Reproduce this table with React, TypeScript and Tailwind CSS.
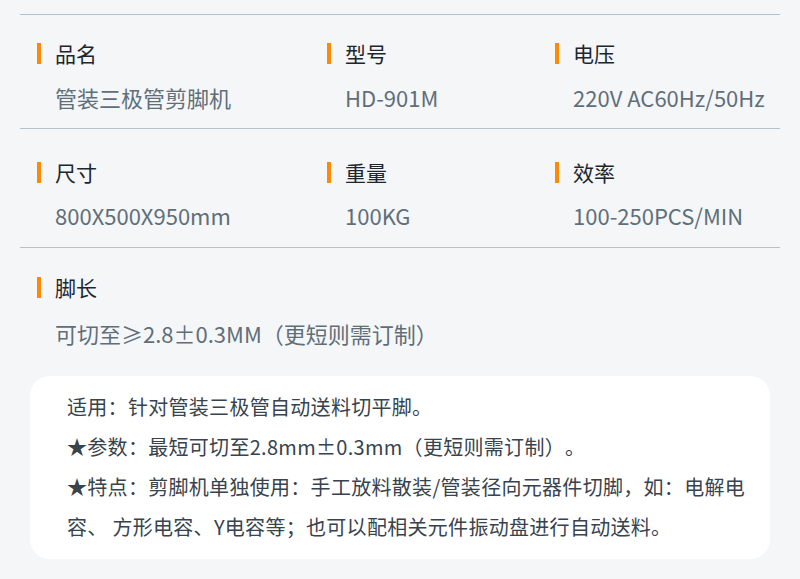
type Spec = { label: string; value: string };

const rows: { pt: string; gap: string; pb: string; items: Spec[] }[] = [
  {
    pt: "pt-[26px]",
    gap: "mt-[20px]",
    pb: "pb-[19px]",
    items: [
      { label: "品名", value: "管装三极管剪脚机" },
      { label: "型号", value: "HD-901M" },
      { label: "电压", value: "220V AC60Hz/50Hz" },
    ],
  },
  {
    pt: "pt-[31px]",
    gap: "mt-[19px]",
    pb: "pb-[20px]",
    items: [
      { label: "尺寸", value: "800X500X950mm" },
      { label: "重量", value: "100KG" },
      { label: "效率", value: "100-250PCS/MIN" },
    ],
  },
];

function SpecCell({ label, value, gap }: Spec & { gap: string }) {
  return (
    <div>
      <div className="flex h-[24px] items-center">
        <span className="h-[21px] w-[4px] bg-[#ff8a00]" />
        <span className="ml-[14px] text-[21px] leading-[24px] text-[#1c262e]">
          {label}
        </span>
      </div>
      <div
        className={`${gap} pl-[18px] text-[22px] leading-[24px] text-[#5f6f7a] whitespace-nowrap`}
      >
        {value}
      </div>
    </div>
  );
}

export default function App() {
  return (
    <div
      className="h-[579px] w-[800px] overflow-hidden bg-[#f5f6f8] px-[20px] pt-[14px] [text-spacing-trim:space-all]"
      style={{ fontFamily: '"Noto Sans CJK SC", "Noto Sans", sans-serif' }}
    >
      {rows.map((row, i) => (
        <div
          key={i}
          className={`grid grid-cols-[290px_228px_1fr] border-t border-[#b7c1ca] pl-[17px] ${row.pt} ${row.pb}`}
        >
          {row.items.map((s) => (
            <SpecCell key={s.label} {...s} gap={row.gap} />
          ))}
        </div>
      ))}
      <div className="border-t border-[#b7c1ca] pl-[17px] pt-[27px]">
        <SpecCell
          label="脚长"
          value="可切至≥2.8±0.3MM（更短则需订制）"
          gap="mt-[22px]"
        />
      </div>
      <div className="mx-[10px] mt-[31px] rounded-[20px] bg-white pb-[12px] pl-[37px] pr-[16px] pt-[11px] text-[20px] leading-[40px] tracking-[0.3px] text-[#37434d]">
        <p>适用：针对管装三极管自动送料切平脚。</p>
        <p>★参数：最短可切至2.8mm±0.3mm（更短则需订制）。</p>
        <p>
          ★特点：剪脚机单独使用：手工放料散装/管装径向元器件切脚，如：电解电容、
          方形电容、Y电容等；也可以配相关元件振动盘进行自动送料。
        </p>
      </div>
    </div>
  );
}
